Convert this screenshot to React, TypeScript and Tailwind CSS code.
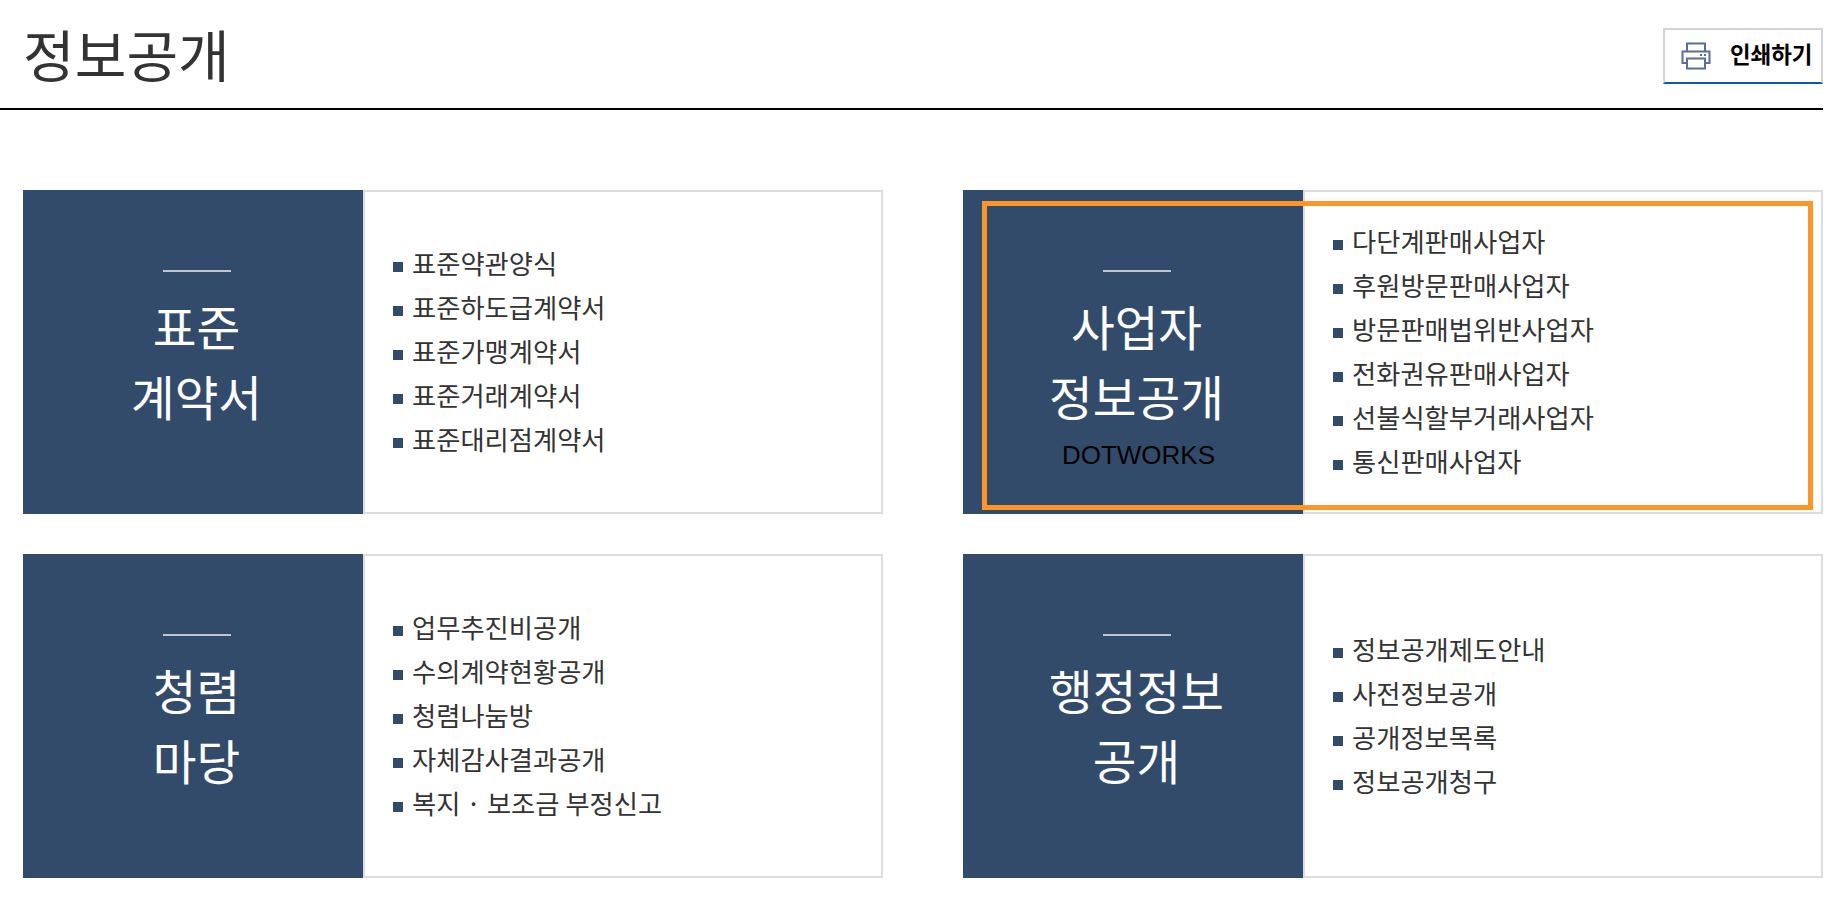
const font = { fontFamily: '"Noto Sans CJK KR", "Noto Sans", sans-serif' };

type Card = { title: string[]; sub?: string; items: string[] };

const CARDS: Card[] = [
  {
    title: ["표준", "계약서"],
    items: ["표준약관양식", "표준하도급계약서", "표준가맹계약서", "표준거래계약서", "표준대리점계약서"],
  },
  {
    title: ["사업자", "정보공개"],
    sub: "DOTWORKS",
    items: ["다단계판매사업자", "후원방문판매사업자", "방문판매법위반사업자", "전화권유판매사업자", "선불식할부거래사업자", "통신판매사업자"],
  },
  {
    title: ["청렴", "마당"],
    items: ["업무추진비공개", "수의계약현황공개", "청렴나눔방", "자체감사결과공개", "복지 · 보조금 부정신고"],
  },
  {
    title: ["행정정보", "공개"],
    items: ["정보공개제도안내", "사전정보공개", "공개정보목록", "정보공개청구"],
  },
];

function PrinterIcon() {
  return (
    <svg width="30" height="28" viewBox="0 0 30 28" fill="none" stroke="#5b6f94" strokeWidth="2">
      <path d="M6 9V1.5h18V9" />
      <path d="M6 21H1.5V9.5h27V21H24" />
      <path d="M6 16.5h18V26.5H6z" />
      <path d="M19 13h2M23 13h2" />
    </svg>
  );
}

function InfoCard({ card }: { card: Card }) {
  return (
    <div className="flex h-[324px]">
      <div className="flex w-[340px] shrink-0 flex-col items-center bg-[#334b6b] pl-[7px] pt-[80px]">
        <div className="ml-px h-[2px] w-[68px] bg-[#c0c5ce]" />
        <div className="mt-[19px] text-center text-[47.5px] leading-[70px] text-white">
          {card.title.map((line) => (
            <div key={line}>{line}</div>
          ))}
        </div>
        {card.sub && (
          <div className="ml-[4px] mt-[9px] text-[26px] leading-[30px] text-black" style={{ fontFamily: '"Liberation Sans", sans-serif' }}>
            {card.sub}
          </div>
        )}
      </div>
      <div className="flex flex-1 items-center border-2 border-l-2 border-[#dddddd] pb-[2px] pl-[28px]">
        <ul>
          {card.items.map((item) => (
            <li key={item} className="flex h-[44px] items-center text-[26.3px] text-[#333333]">
              <span className="mr-[9px] mt-[8px] h-[10px] w-[10px] bg-[#334b6b]" />
              <span>{item}</span>
            </li>
          ))}
        </ul>
      </div>
    </div>
  );
}

export default function App() {
  return (
    <div className="min-h-[912px] w-[1842px] bg-white" style={font}>
      <div className="ml-0 flex h-[110px] w-[1823px] items-start justify-between border-b-2 border-black pl-[23px]">
        <h1 className="mt-[17px] text-[56.2px] leading-[72px] text-[#333333]">정보공개</h1>
        <div className="mt-[28px] flex h-[56px] w-[160px] items-center border-2 border-b-2 border-[#d3d3d3] border-b-[#0a5aa5] pl-[16px]">
          <PrinterIcon />
          <span className="-mt-[4px] ml-[19px] text-[22.4px] font-bold text-black">인쇄하기</span>
        </div>
      </div>
      <div className="relative ml-[23px] mt-[80px] grid w-[1800px] grid-cols-2 gap-x-[80px] gap-y-[40px]">
        {CARDS.map((card) => (
          <InfoCard key={card.title[0]} card={card} />
        ))}
        <div className="pointer-events-none absolute left-[959px] top-[11px] h-[309px] w-[831px] border-[5px] border-[#ff9429]" />
      </div>
    </div>
  );
}
